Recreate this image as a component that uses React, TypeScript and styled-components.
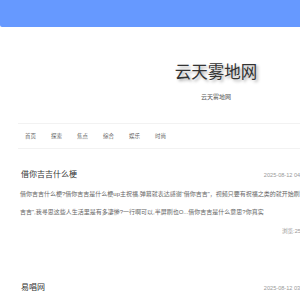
import React from "react";
import styled, { createGlobalStyle } from "styled-components";

const articles = [
  {
    title: "借你吉吉什么梗",
    date: "2025-08-12 04:27",
    summary:
      "借你吉吉什么梗?借你吉吉是什么梗up主祝福,弹幕就表达感谢“借你吉吉”，视频只要有祝福之类的就开始刷“借你吉吉”,我寻思这些人生活里是有多凄惨?一行啊可以,半屏刷也O...借你吉吉是什么意思?你真实",
    views: "浏览:253",
  },
  {
    title: "易唱网",
    date: "2025-08-12 03:58",
    summary: "",
    views: "",
  },
];

const navItems = ["首页", "探索", "焦点", "综合", "娱乐", "时尚"];

const App = () => {
  return (
    <Page>
      <GlobalStyle />
      <TopBar />
      <Wrap>
        <Brand>
          <SiteName>云天雾地网</SiteName>
          <SiteSub>云天雾地网</SiteSub>
        </Brand>
        <Nav>
          {navItems.map((item) => (
            <NavItem key={item}>{item}</NavItem>
          ))}
        </Nav>
        <List>
          {articles.map((a) => (
            <Article key={a.title}>
              <ArticleHead>
                <ArticleTitle>{a.title}</ArticleTitle>
                <ArticleDate>{a.date}</ArticleDate>
              </ArticleHead>
              {a.summary && <Summary>{a.summary}</Summary>}
              {a.views && <Views>{a.views}</Views>}
            </Article>
          ))}
        </List>
      </Wrap>
    </Page>
  );
};

export default App;

const GlobalStyle = createGlobalStyle`
  html, body {
    margin: 0;
    padding: 0;
    overflow: hidden;
    background: #ffffff;
    font-family: "Liberation Sans", "Noto Sans CJK SC", sans-serif;
  }
`;

const Page = styled.div`
  width: 300px;
  height: 300px;
  overflow: hidden;
`;

const TopBar = styled.div`
  height: 27px;
  width: 100%;
  background-color: #6699ff;
  border-bottom-left-radius: 2px;
`;

const Wrap = styled.div`
  margin-left: 18px;
  width: 396px;
`;

const Brand = styled.div`
  padding-top: 33px;
  text-align: center;
`;

const SiteName = styled.div`
  font-size: 16.5px;
  line-height: 24px;
  color: #333;
  text-shadow: 2px 2px 3px #aaa;
`;

const SiteSub = styled.div`
  margin-top: 8px;
  font-size: 6px;
  line-height: 10px;
  color: #555;
`;

const Nav = styled.div`
  margin-top: 21px;
  height: 24px;
  border-top: 1px solid #f2f2f2;
  border-bottom: 1px solid #f2f2f2;
  display: flex;
  align-items: center;
  gap: 15px;
  padding-left: 7px;
`;

const NavItem = styled.div`
  font-size: 5.5px;
  color: #666;
`;

const List = styled.div`
  margin-top: 20px;
  width: 292px;
  display: flex;
  flex-direction: column;
  gap: 46px;
`;

const Article = styled.div`
  padding: 0 2px;
`;

const ArticleHead = styled.div`
  display: flex;
  justify-content: space-between;
  align-items: center;
  height: 12px;
`;

const ArticleTitle = styled.div`
  font-size: 8px;
  line-height: 12px;
  color: #333;
  padding-left: 1px;
`;

const ArticleDate = styled.div`
  font-size: 5.6px;
  color: #999;
`;

const Summary = styled.div`
  margin-top: 4px;
  margin-right: -8px;
  font-size: 6px;
  line-height: 18px;
  color: #666;
`;

const Views = styled.div`
  margin-top: 5px;
  margin-right: 4px;
  font-size: 5.6px;
  line-height: 10px;
  color: #999;
  text-align: right;
`;
